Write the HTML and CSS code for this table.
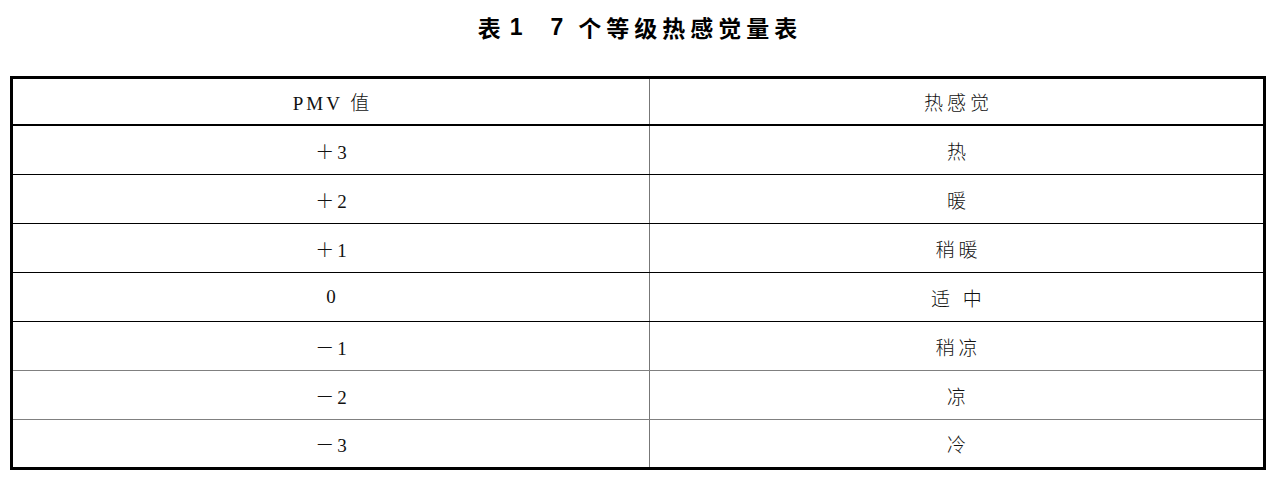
FILE: index.html
```html
<!DOCTYPE html>
<html lang="zh">
<head>
<meta charset="utf-8">
<link rel="stylesheet" href="styles.css">
</head>
<body>
<div class="title"><span class="t-a">表</span><span class="t-num">1</span><span class="t-num t-seven">7</span><span class="t-b">个等级热感觉量表</span></div>
<div class="table">
  <div class="row head">
    <div class="cell">PMV 值</div>
    <div class="cell right">热感觉</div>
  </div>
  <div class="row first">
    <div class="cell">＋3</div>
    <div class="cell right">热</div>
  </div>
  <div class="row">
    <div class="cell">＋2</div>
    <div class="cell right">暖</div>
  </div>
  <div class="row">
    <div class="cell">＋1</div>
    <div class="cell right">稍暖</div>
  </div>
  <div class="row">
    <div class="cell">0</div>
    <div class="cell right">适 中</div>
  </div>
  <div class="row">
    <div class="cell">－1</div>
    <div class="cell right">稍凉</div>
  </div>
  <div class="row gray">
    <div class="cell">－2</div>
    <div class="cell right">凉</div>
  </div>
  <div class="row gray last">
    <div class="cell">－3</div>
    <div class="cell right">冷</div>
  </div>
</div>
</body>
</html>
```

FILE: styles.css
```css
html, body {
  margin: 0;
  padding: 0;
  background: #fff;
}
body {
  width: 1281px;
  height: 494px;
  overflow: hidden;
}
.title {
  height: 76px;
  box-sizing: border-box;
  padding-top: 14px;
  padding-right: 6px;
  display: flex;
  justify-content: center;
  align-items: flex-start;
  font-family: "Noto Sans CJK SC", sans-serif;
  font-weight: 700;
  font-size: 23px;
  line-height: 26px;
  color: #000;
}
.t-a { margin-right: 9px; }
.t-num { font-family: "Liberation Sans", "Noto Sans CJK SC", sans-serif; font-weight: 700; }
.t-seven { margin-left: 28px; margin-right: 15px; }
.t-b { letter-spacing: 5px; margin-right: -5px; }
.table {
  margin-left: 10px;
  width: 1256px;
  box-sizing: border-box;
  border: 3px solid #000;
  font-family: "Liberation Serif", "Noto Sans CJK SC", serif;
  font-size: 19px;
  color: #111;
}
.row {
  display: grid;
  grid-template-columns: 636px 1fr;
  height: 49px;
  box-sizing: border-box;
  border-top: 1px solid #000;
}
.row.gray { border-top-color: #808080; }
.row.head {
  height: 45px;
  border-top: none;
}
.row.first {
  height: 50px;
  border-top: 2px solid #000;
}
.row.last { height: 48px; }
.cell {
  display: flex;
  align-items: center;
  justify-content: center;
  font-weight: 300;
  letter-spacing: 3px;
  padding-left: 3px;
}
.cell.right {
  border-left: 1px solid #777;
  letter-spacing: 4px;
  padding-left: 4px;
}
```
